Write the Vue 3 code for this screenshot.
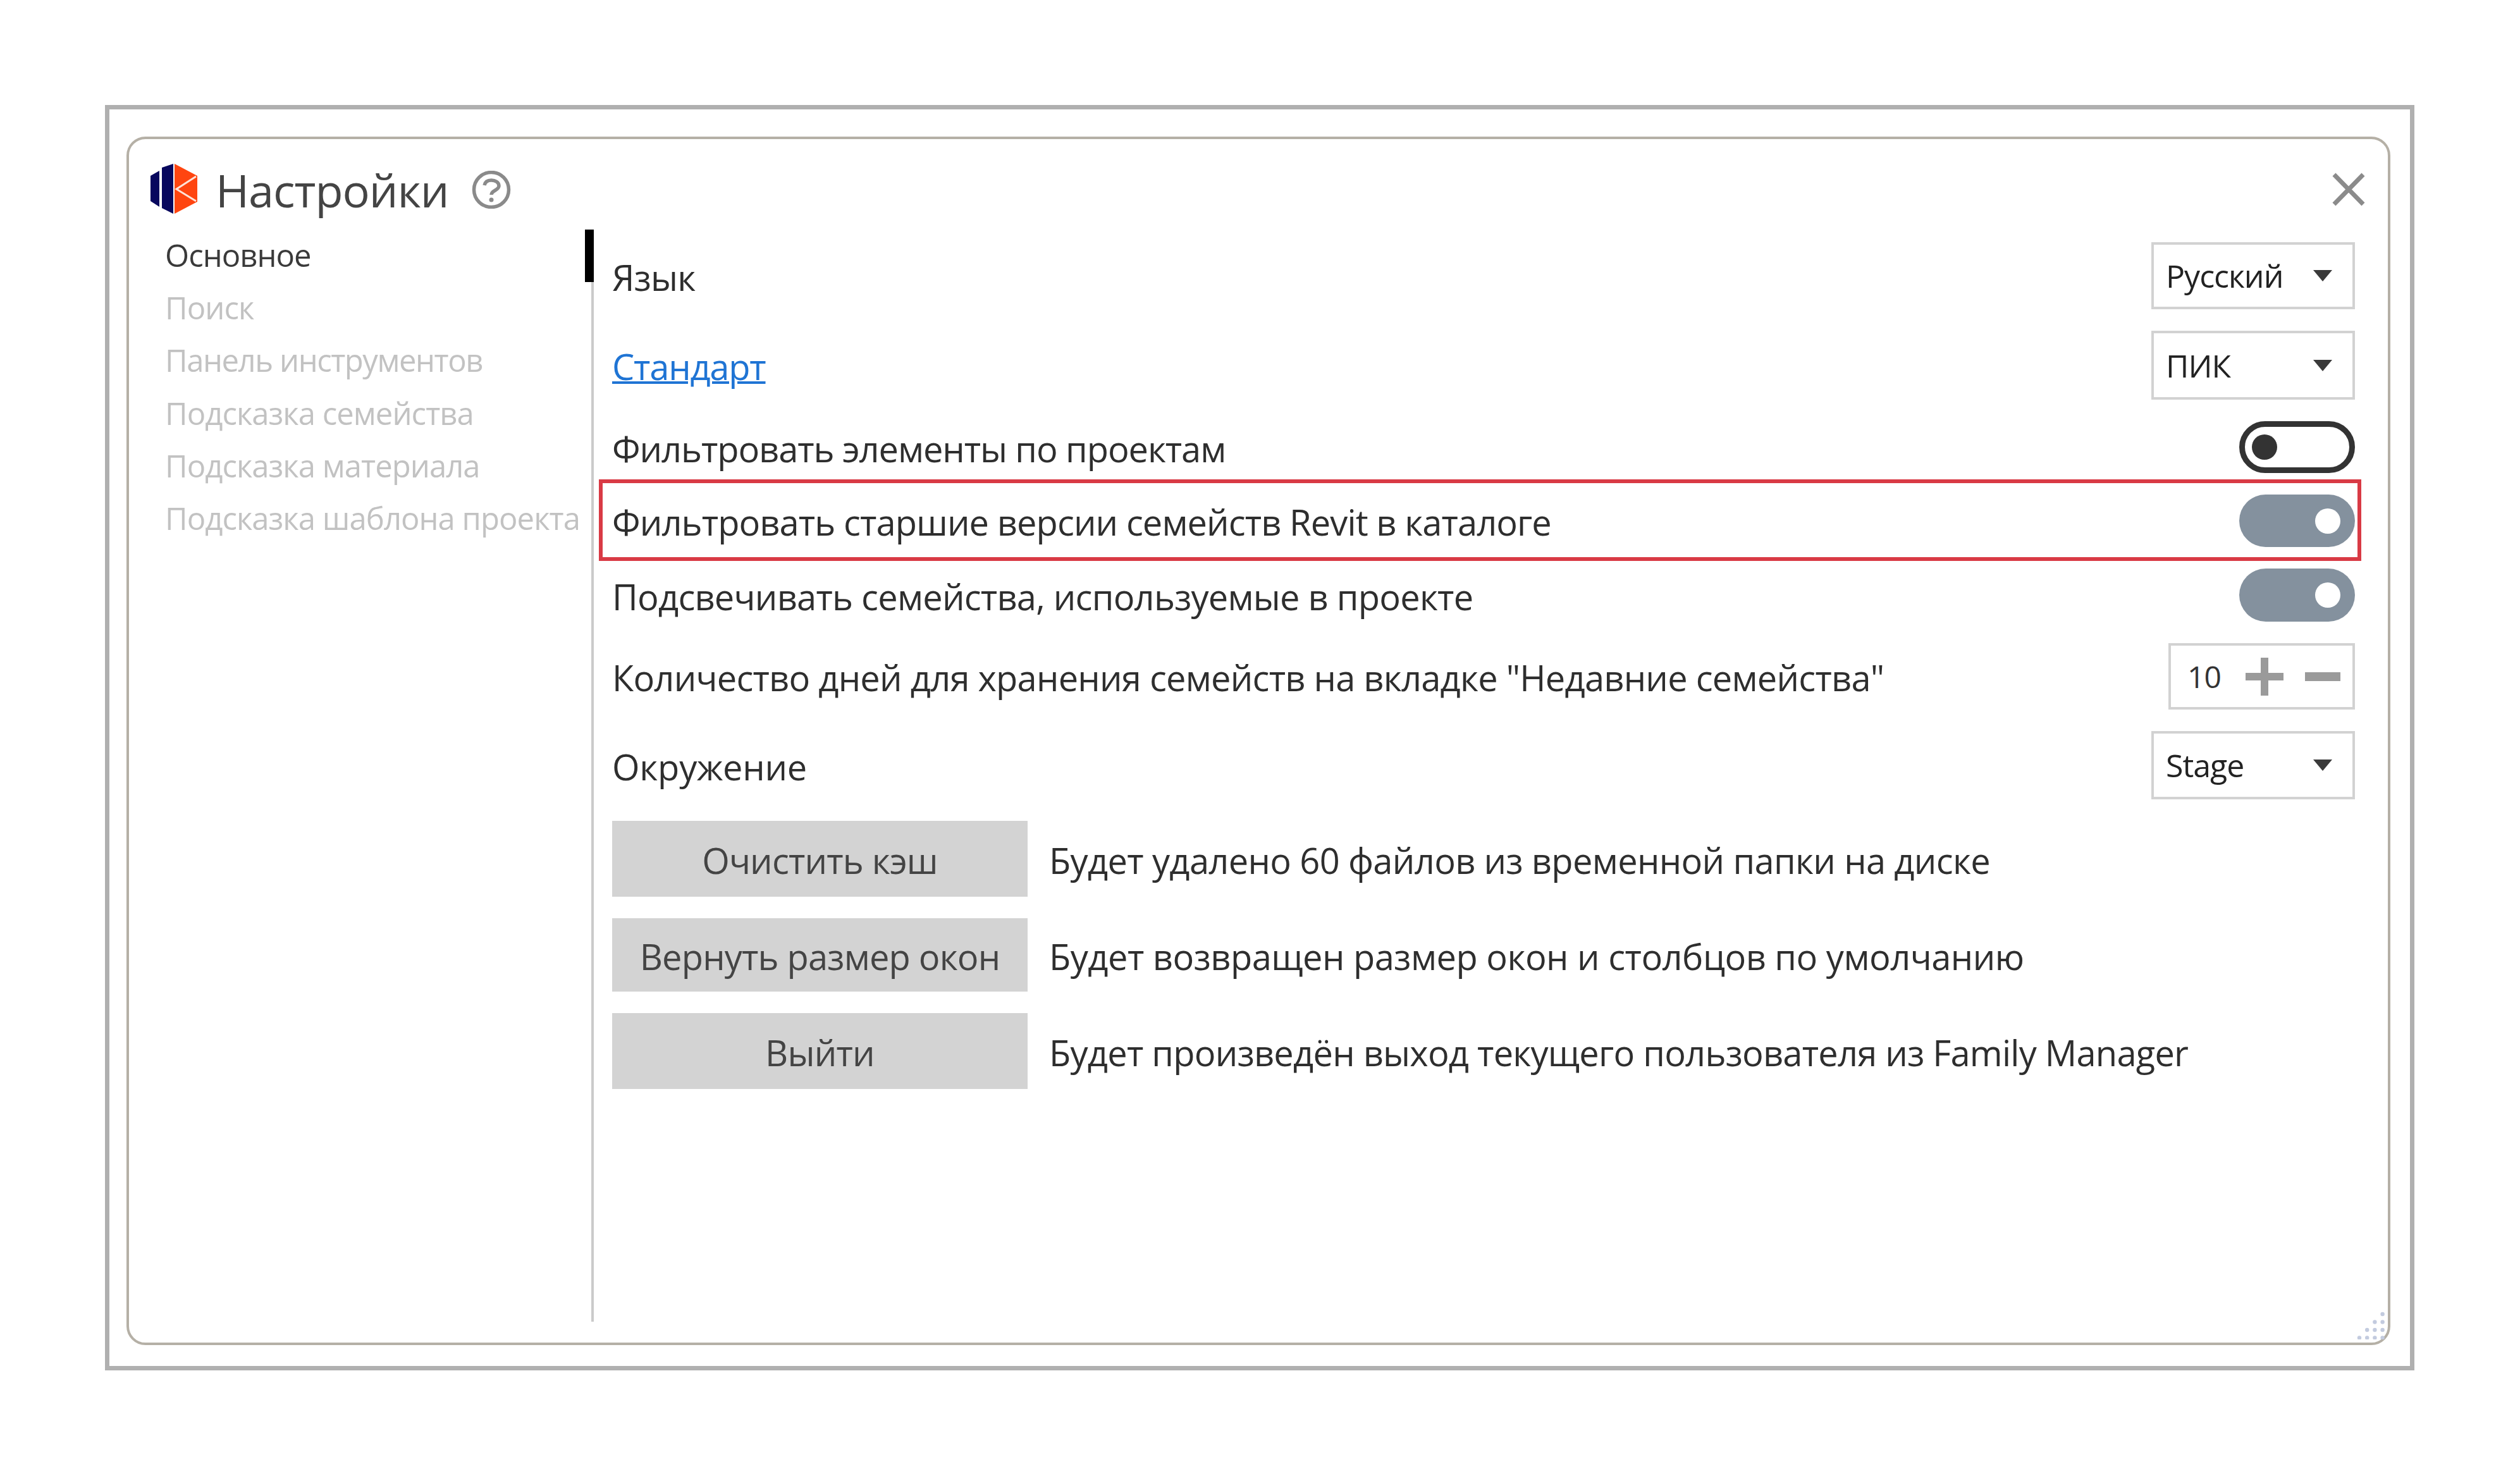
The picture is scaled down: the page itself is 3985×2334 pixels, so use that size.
<script setup>
const nav = ['Основное', 'Поиск', 'Панель инструментов', 'Подсказка семейства', 'Подсказка материала', 'Подсказка шаблона проекта']
const actions = [
  { label: 'Очистить кэш', text: 'Будет удалено 60 файлов из временной папки на диске', tall: true, track: 'track-a' },
  { label: 'Вернуть размер окон', text: 'Будет возвращен размер окон и столбцов по умолчанию', tall: false, track: 'track-b' },
  { label: 'Выйти', text: 'Будет произведён выход текущего пользователя из Family Manager', tall: true, track: '' },
]
const grip = [[3, 0], [2, 1], [3, 1], [1, 2], [2, 2], [3, 2], [0, 3], [1, 3], [2, 3], [3, 3]]
</script>

<template>
  <div class="frame">
    <div class="dialog">
      <header class="head">
        <svg class="logo" viewBox="0 0 74 82" width="74" height="82">
          <path d="M0 20L14 12V69L0 60Z" fill="#08085e" />
          <path d="M18 7L36 1V80L18 71Z" fill="#08085e" />
          <path d="M38 1L74 20V61L38 80Z" fill="#ff4510" />
          <path d="M72 21L41 41L72 60" fill="none" stroke="#ffe3d8" stroke-width="3" />
        </svg>
        <h1 class="title">Настройки</h1>
        <svg class="help" viewBox="0 0 62 60" width="62" height="60">
          <circle cx="31" cy="30" r="27.500" fill="none" stroke="#8a8a8a" stroke-width="5.500" />
          <path d="M20 23c1-5 5-8 11-8s12 3 12 9c0 7-12 7-12 14" fill="none" stroke="#8a8a8a" stroke-width="5.500" />
          <circle cx="31" cy="46" r="3.500" fill="#8a8a8a" />
        </svg>
        <svg class="close" viewBox="0 0 52 53" width="52" height="53">
          <path d="M3 3L49 50M49 3L3 50" fill="none" stroke="#8b8b8b" stroke-width="7" />
        </svg>
      </header>

      <div class="body">
        <nav class="side">
          <span class="marker"></span>
          <div v-for="(item, i) in nav" :key="item" class="nav-item" :class="{ active: i === 0, narrow: i === 2 }">{{ item }}</div>
        </nav>

        <main class="main">
          <div class="row h106">
            <span class="label">Язык</span>
            <div class="select"><span>Русский</span><i class="caret"></i></div>
          </div>
          <div class="row h109">
            <a class="label link">Стандарт</a>
            <div class="select"><span>ПИК</span><i class="caret"></i></div>
          </div>
          <div class="row h82">
            <span class="label track-c">Фильтровать элементы по проектам</span>
            <div class="toggle off"><i></i></div>
          </div>
          <div class="row h83">
            <span class="mark"></span>
            <span class="label track-d">Фильтровать старшие версии семейств Revit в каталоге</span>
            <div class="toggle on"><i></i></div>
          </div>
          <div class="row h84">
            <span class="label">Подсвечивать семейства, используемые в проекте</span>
            <div class="toggle on"><i></i></div>
          </div>
          <div class="row h105">
            <span class="label">Количество дней для хранения семейств на вкладке "Недавние семейства"</span>
            <div class="stepper">
              <span class="num">10</span>
              <svg class="plus" viewBox="0 0 60 60" width="60" height="60"><path d="M24 0h12v24h24v12H36v24H24V36H0V24h24z" fill="#9a9a9a" /></svg>
              <span class="minus"></span>
            </div>
          </div>
          <div class="row h108">
            <span class="label track-e">Окружение</span>
            <div class="select"><span>Stage</span><i class="caret"></i></div>
          </div>
          <div v-for="a in actions" :key="a.label" class="action" :class="a.tall ? 'h120' : 'h116'">
            <button class="btn" type="button">{{ a.label }}</button>
            <span class="label" :class="a.track">{{ a.text }}</span>
          </div>
        </main>
      </div>

      <svg class="grip" viewBox="0 0 44 44" width="44" height="44">
        <circle v-for="(p, i) in grip" :key="i" :cx="4 + p[0] * 12.200" :cy="4 + p[1] * 12.500" r="3.200" fill="#c3cbdf" />
      </svg>
    </div>
  </div>
</template>

<style>
html, body { margin: 0; background: #fff; }
</style>

<style scoped>
.frame {
  box-sizing: border-box;
  width: 3652px;
  height: 2001px;
  margin: 166px 0 0 166px;
  padding: 43px 31px 33px 27px;
  border: 7px solid #b0b0b0;
  font-family: "Open Sans", "Noto Sans", sans-serif;
  color: #2e2e2e;
}
.dialog {
  position: relative;
  box-sizing: border-box;
  height: 100%;
  border: 4px solid #b5b0a6;
  border-radius: 30px;
  background: #fff;
}
.head {
  display: flex;
  align-items: flex-start;
  box-sizing: border-box;
  height: 143px;
  padding: 38px 36px 0 34px;
}
.logo { flex: none; }
.title {
  margin: 6px 0 0 29px;
  font-size: 72px;
  font-weight: 400;
  letter-spacing: -1px;
  color: #444;
  line-height: 1;
}
.help { flex: none; margin: 12px 0 0 36px; }
.close { flex: none; margin: 15px 0 0 auto; }
.body { display: flex; height: 1727px; }
.side {
  position: relative;
  flex: none;
  box-sizing: border-box;
  width: 735px;
  padding-left: 57px;
  border-right: 4px solid #cacaca;
  white-space: nowrap;
}
.marker {
  position: absolute;
  top: 0;
  right: -4px;
  width: 14px;
  height: 83px;
  background: #000;
}
.nav-item {
  display: flex;
  align-items: center;
  box-sizing: border-box;
  height: 83.200px;
  padding-bottom: 3px;
  font-size: 49px;
  letter-spacing: -0.950px;
  color: #c2c2c2;
}
.nav-item.active { color: #3a3a3a; }
.nav-item.narrow { letter-spacing: -1.450px; }
.main {
  flex: 1;
  display: flex;
  flex-direction: column;
  gap: 34px;
  padding: 20px 52px 0 29px;
}
.row, .action { display: flex; align-items: center; }
.row { justify-content: space-between; position: relative; }
.h82 { height: 82px; }
.h83 { height: 83px; }
.h84 { height: 84px; }
.h105 { height: 105px; }
.h106 { height: 106px; }
.h108 { height: 108px; }
.h109 { height: 109px; }
.h116 { height: 116px; }
.h120 { height: 120px; }
.label { padding-top: 3px; font-size: 56px; letter-spacing: -0.750px; white-space: nowrap; color: #2e2e2e; }
.track-a { letter-spacing: -0.650px; }
.track-b { letter-spacing: -0.500px; }
.track-c { letter-spacing: -1.070px; }
.track-d { letter-spacing: -0.900px; }
.track-e { letter-spacing: -0.200px; }
.link { color: #1f74d4; letter-spacing: -1.200px; text-decoration: underline; text-decoration-thickness: 4px; }
.mark {
  position: absolute;
  left: -21px;
  right: -10px;
  top: -24px;
  bottom: -22px;
  border: 6px solid #d93a45;
}
.select {
  display: flex;
  align-items: center;
  justify-content: space-between;
  box-sizing: border-box;
  width: 322px;
  height: 100%;
  padding: 0 32px 0 19px;
  border: 4px solid #d2d2d2;
  font-size: 50px;
  letter-spacing: -1px;
  color: #222;
}
.caret {
  width: 0;
  height: 0;
  border-left: 15.500px solid transparent;
  border-right: 15.500px solid transparent;
  border-top: 18px solid #3a3a3a;
}
.toggle {
  display: flex;
  align-items: center;
  box-sizing: border-box;
  width: 183px;
  height: 100%;
  border-radius: 42px;
}
.toggle i { display: block; border-radius: 50%; }
.toggle.off { border: 9px solid #333; padding-left: 11px; }
.toggle.off i { width: 40px; height: 40px; background: #333; }
.toggle.on { background: #84919e; justify-content: flex-end; padding-right: 23px; }
.toggle.on i { width: 40px; height: 40px; background: #fff; }
.stepper {
  display: flex;
  align-items: center;
  box-sizing: border-box;
  width: 295px;
  height: 100%;
  padding-left: 26px;
  border: 4px solid #d2d2d2;
}
.num { width: 92px; font-size: 48px; letter-spacing: -1px; color: #333; }
.plus { flex: none; }
.minus { width: 56px; height: 14px; margin-left: 34px; background: #9a9a9a; }
.btn {
  flex: none;
  width: 657px;
  height: 100%;
  margin-right: 34px;
  padding: 3px 0 0;
  border: 0;
  background: #d3d3d3;
  font: inherit;
  font-size: 56px;
  letter-spacing: -0.800px;
  color: #444;
}
.grip { position: absolute; right: 5px; bottom: 5px; }
</style>
